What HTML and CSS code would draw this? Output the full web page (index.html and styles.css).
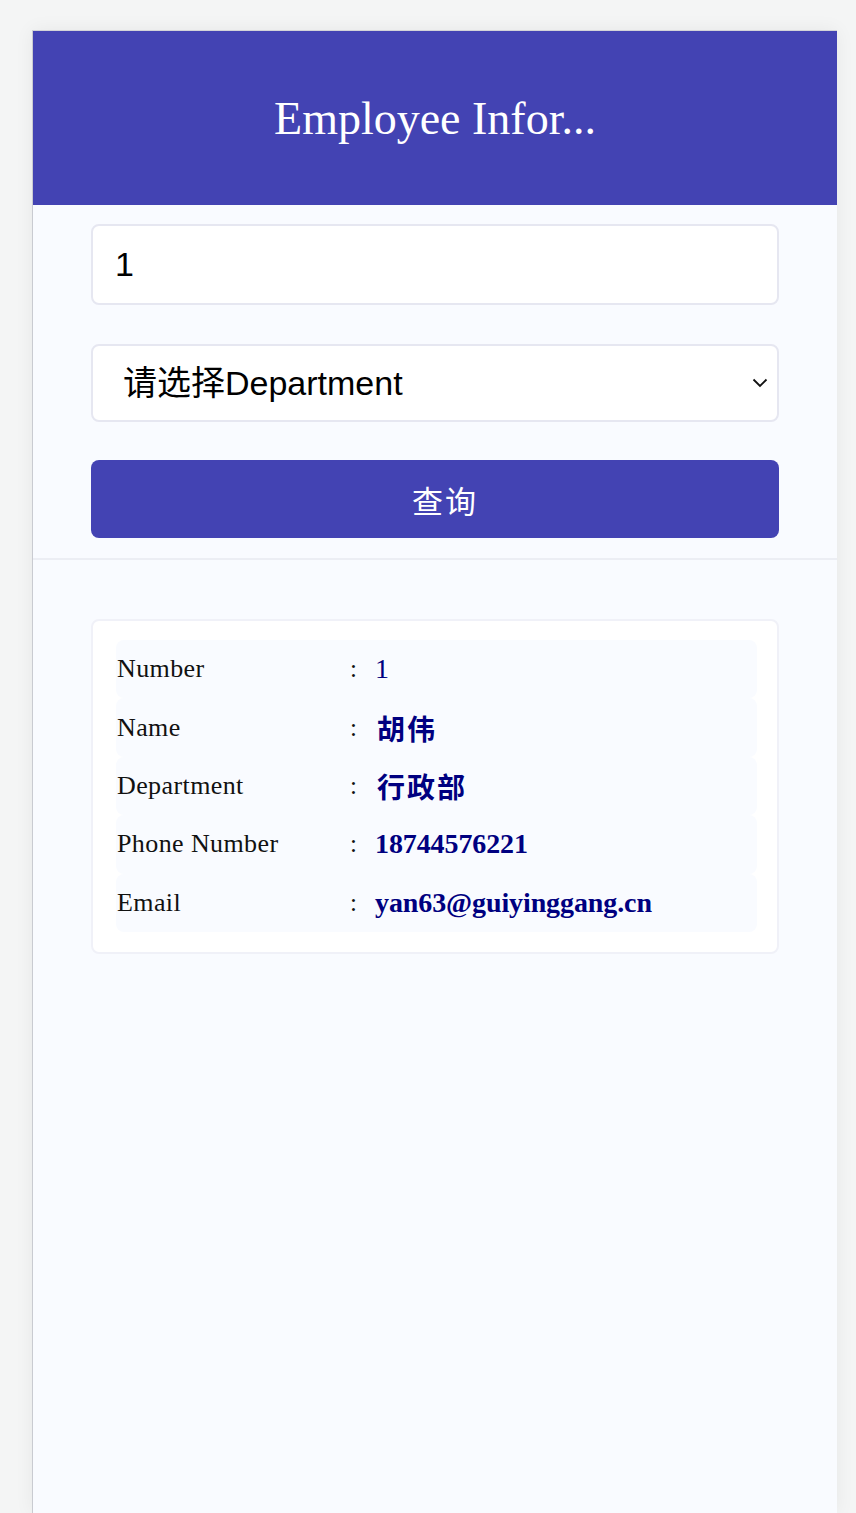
FILE: index.html
```html
<!DOCTYPE html>
<html lang="zh-CN">
<head>
<meta charset="utf-8">
<title>Employee Information</title>
<link rel="stylesheet" href="styles.css">
</head>
<body>
<div class="app">
  <header class="header">
    <h1 class="title">Employee Infor...</h1>
  </header>
  <section class="form">
    <input class="field input" type="text" value="1">
    <div class="select-wrap">
      <select class="field select">
        <option>请选择Department</option>
      </select>
      <svg class="chevron" width="16" height="10" viewBox="0 0 16 10"><path d="M1.5 1.5 L8 8 L14.5 1.5" fill="none" stroke="#111" stroke-width="1.8"/></svg>
    </div>
    <button class="btn">查询</button>
  </section>
  <section class="result">
    <div class="card">
      <div class="row"><span class="label">Number</span><span class="colon">:</span><span class="value light">1</span></div>
      <div class="row"><span class="label">Name</span><span class="colon">:</span><span class="value cjk">胡伟</span></div>
      <div class="row"><span class="label">Department</span><span class="colon">:</span><span class="value cjk">行政部</span></div>
      <div class="row"><span class="label">Phone Number</span><span class="colon">:</span><span class="value">18744576221</span></div>
      <div class="row"><span class="label">Email</span><span class="colon">:</span><span class="value">yan63@guiyinggang.cn</span></div>
    </div>
  </section>
</div>
</body>
</html>
```

FILE: styles.css
```css
html, body {
  margin: 0;
  padding: 0;
  background: #f4f5f5;
  height: 100%;
}
body {
  font-family: "Liberation Serif", "Noto Sans CJK SC", serif;
}
.app {
  margin: 30px 19px 0 32px;
  width: 805px;
  min-height: 1483px;
  background: #f9fbff;
  border-left: 1px solid #c9cbd1;
  border-top: 1px solid #d3d4d8;
  box-shadow: 0 0 18px rgba(0, 0, 0, 0.06);
  box-sizing: border-box;
}
.header {
  height: 174px;
  background: #4343b3;
  display: flex;
  align-items: center;
  justify-content: center;
}
.title {
  margin: 0;
  color: #ffffff;
  font-weight: 400;
  font-size: 46px;
  font-family: "Liberation Serif", serif;
}
.form {
  padding: 19px 58px 20px 58px;
  display: flex;
  flex-direction: column;
  border-bottom: 2px solid #eceef4;
}
.field {
  box-sizing: border-box;
  width: 100%;
  border: 2px solid #e6e7f1;
  border-radius: 8px;
  background: #ffffff;
  font-family: "Liberation Sans", "Noto Sans CJK SC", sans-serif;
  font-size: 34px;
  color: #000;
  outline: none;
}
.input {
  height: 81px;
  padding: 0 22px;
}
.select-wrap {
  position: relative;
  margin-top: 39px;
}
.select {
  height: 78px;
  padding: 0 30px;
  appearance: none;
  -webkit-appearance: none;
  display: block;
}
.chevron {
  position: absolute;
  right: 11px;
  top: 34px;
}
.btn {
  margin-top: 38px;
  height: 78px;
  border: none;
  border-radius: 8px;
  background: #4343b3;
  color: #ffffff;
  font-family: "Noto Sans CJK SC", sans-serif;
  font-size: 31px;
  padding: 0 0 0 20px;
  letter-spacing: 2px;
}
.result {
  padding: 59px 58px 0 58px;
}
.card {
  background: #ffffff;
  border: 2px solid #f0f1f8;
  border-radius: 8px;
  padding: 19px 20px 20px 23px;
}
.row {
  display: flex;
  align-items: center;
  height: 58.4px;
  background: #f9fbff;
  border-radius: 8px;
}
.label {
  width: 233px;
  padding-left: 1px;
  font-size: 26px;
  letter-spacing: 0.4px;
  color: #111;
}
.colon {
  width: 25px;
  font-size: 25px;
  color: #111;
}
.value {
  color: #000080;
  font-size: 28px;
  font-weight: 600;
  letter-spacing: -0.1px;
}
.value.light {
  font-weight: 400;
}
.value.cjk {
  font-family: "Noto Sans CJK SC", serif;
  font-size: 28px;
  font-weight: 700;
  letter-spacing: 2px;
  padding-left: 2px;
}
```
